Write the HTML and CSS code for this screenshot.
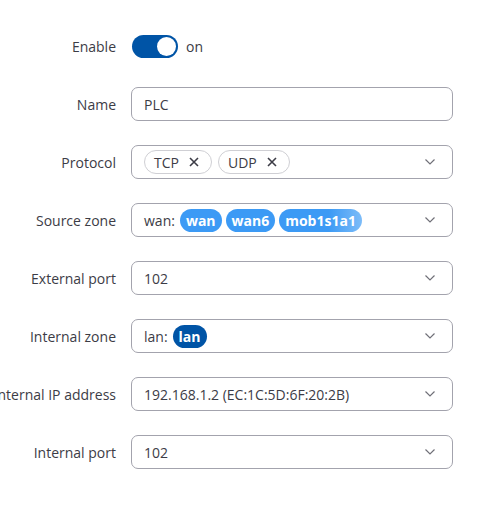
FILE: index.html
```html
<!DOCTYPE html>
<html>
<head>
<meta charset="utf-8">
<link rel="stylesheet" href="styles.css">
</head>
<body>
<form class="form">
  <div class="row">
    <label class="label">Enable</label>
    <div class="control toggle-wrap">
      <span class="toggle"><span class="knob"></span></span>
      <span class="toggle-text">on</span>
    </div>
  </div>
  <div class="row">
    <label class="label">Name</label>
    <div class="control field"><span class="value">PLC</span></div>
  </div>
  <div class="row">
    <label class="label">Protocol</label>
    <div class="control field select">
      <span class="chips">
        <span class="chip">TCP <svg class="x" viewBox="0 0 10 10"><path d="M1 1L9 9M9 1L1 9"/></svg></span>
        <span class="chip">UDP <svg class="x" viewBox="0 0 10 10"><path d="M1 1L9 9M9 1L1 9"/></svg></span>
      </span>
      <svg class="chev" viewBox="0 0 10 6"><path d="M0.5 0.5L5 5L9.5 0.5"/></svg>
    </div>
  </div>
  <div class="row">
    <label class="label">Source zone</label>
    <div class="control field select">
      <span class="chips tags">
        <span class="value">wan:</span>
        <span class="tag">wan</span>
        <span class="tag">wan6</span>
        <span class="tag fade">mob1s1a1</span>
      </span>
      <svg class="chev" viewBox="0 0 10 6"><path d="M0.5 0.5L5 5L9.5 0.5"/></svg>
    </div>
  </div>
  <div class="row">
    <label class="label">External port</label>
    <div class="control field select">
      <span class="value">102</span>
      <svg class="chev" viewBox="0 0 10 6"><path d="M0.5 0.5L5 5L9.5 0.5"/></svg>
    </div>
  </div>
  <div class="row">
    <label class="label">Internal zone</label>
    <div class="control field select">
      <span class="chips tags">
        <span class="value">lan:</span>
        <span class="tag dark">lan</span>
      </span>
      <svg class="chev" viewBox="0 0 10 6"><path d="M0.5 0.5L5 5L9.5 0.5"/></svg>
    </div>
  </div>
  <div class="row">
    <label class="label">Internal IP address</label>
    <div class="control field select">
      <span class="value">192.168.1.2 (EC:1C:5D:6F:20:2B)</span>
      <svg class="chev" viewBox="0 0 10 6"><path d="M0.5 0.5L5 5L9.5 0.5"/></svg>
    </div>
  </div>
  <div class="row">
    <label class="label">Internal port</label>
    <div class="control field select">
      <span class="value">102</span>
      <svg class="chev" viewBox="0 0 10 6"><path d="M0.5 0.5L5 5L9.5 0.5"/></svg>
    </div>
  </div>
</form>
</body>
</html>
```
FILE: styles.css
```css
html, body {
  margin: 0;
  padding: 0;
  background: #fff;
}
body {
  font-family: "Open Sans", "Noto Sans", sans-serif;
  font-size: 14px;
  color: #404040;
  overflow: hidden;
}
.form {
  display: grid;
  grid-template-columns: 116px 322px;
  column-gap: 15px;
  row-gap: 24px;
  padding-top: 29px;
}
.row {
  display: contents;
}
.label {
  display: flex;
  align-items: center;
  justify-content: flex-end;
  white-space: nowrap;
  height: 34px;
  color: #3c3c46;
}
.control {
  height: 34px;
  box-sizing: border-box;
}
.toggle-wrap {
  display: flex;
  align-items: center;
  gap: 8px;
  padding-left: 1px;
}
.toggle {
  display: flex;
  align-items: center;
  justify-content: flex-end;
  width: 46px;
  height: 23px;
  border-radius: 12px;
  background: #0054a6;
  padding: 0 2px;
  box-sizing: border-box;
}
.knob {
  width: 19px;
  height: 19px;
  border-radius: 50%;
  background: #fff;
}
.toggle-text {
  color: #3c3c46;
}
.field {
  display: flex;
  align-items: center;
  border: 1px solid #a3a3ad;
  border-radius: 7px;
  padding: 0 17px 0 12px;
}
.value {
  color: #3c3c46;
  white-space: nowrap;
}
.select {
  justify-content: space-between;
}
.chips {
  display: flex;
  align-items: center;
  gap: 6px;
}
.chips.tags {
  gap: 4px;
}
.chips.tags .value {
  margin-right: 1px;
}
.chip {
  display: flex;
  align-items: center;
  gap: 10px;
  height: 24px;
  box-sizing: border-box;
  border: 1px solid #cfcfd4;
  border-radius: 12px;
  padding: 0 12px 0 9px;
  color: #3c3c46;
}
.x {
  width: 10px;
  height: 10px;
  fill: none;
  stroke: #3c3c46;
  stroke-width: 1.6;
}
.tag {
  display: flex;
  align-items: center;
  height: 23px;
  border-radius: 12px;
  padding: 0 6px;
  background: #3c9af5;
  color: #fff;
  font-weight: 700;
}
.tag.fade {
  background: linear-gradient(to right, #3c9af5 60%, #7dbcf8);
}
.tag.dark {
  background: #0054a6;
}
.chev {
  width: 10px;
  height: 6px;
  fill: none;
  stroke: #707078;
  stroke-width: 1.2;
  flex: none;
}
```
